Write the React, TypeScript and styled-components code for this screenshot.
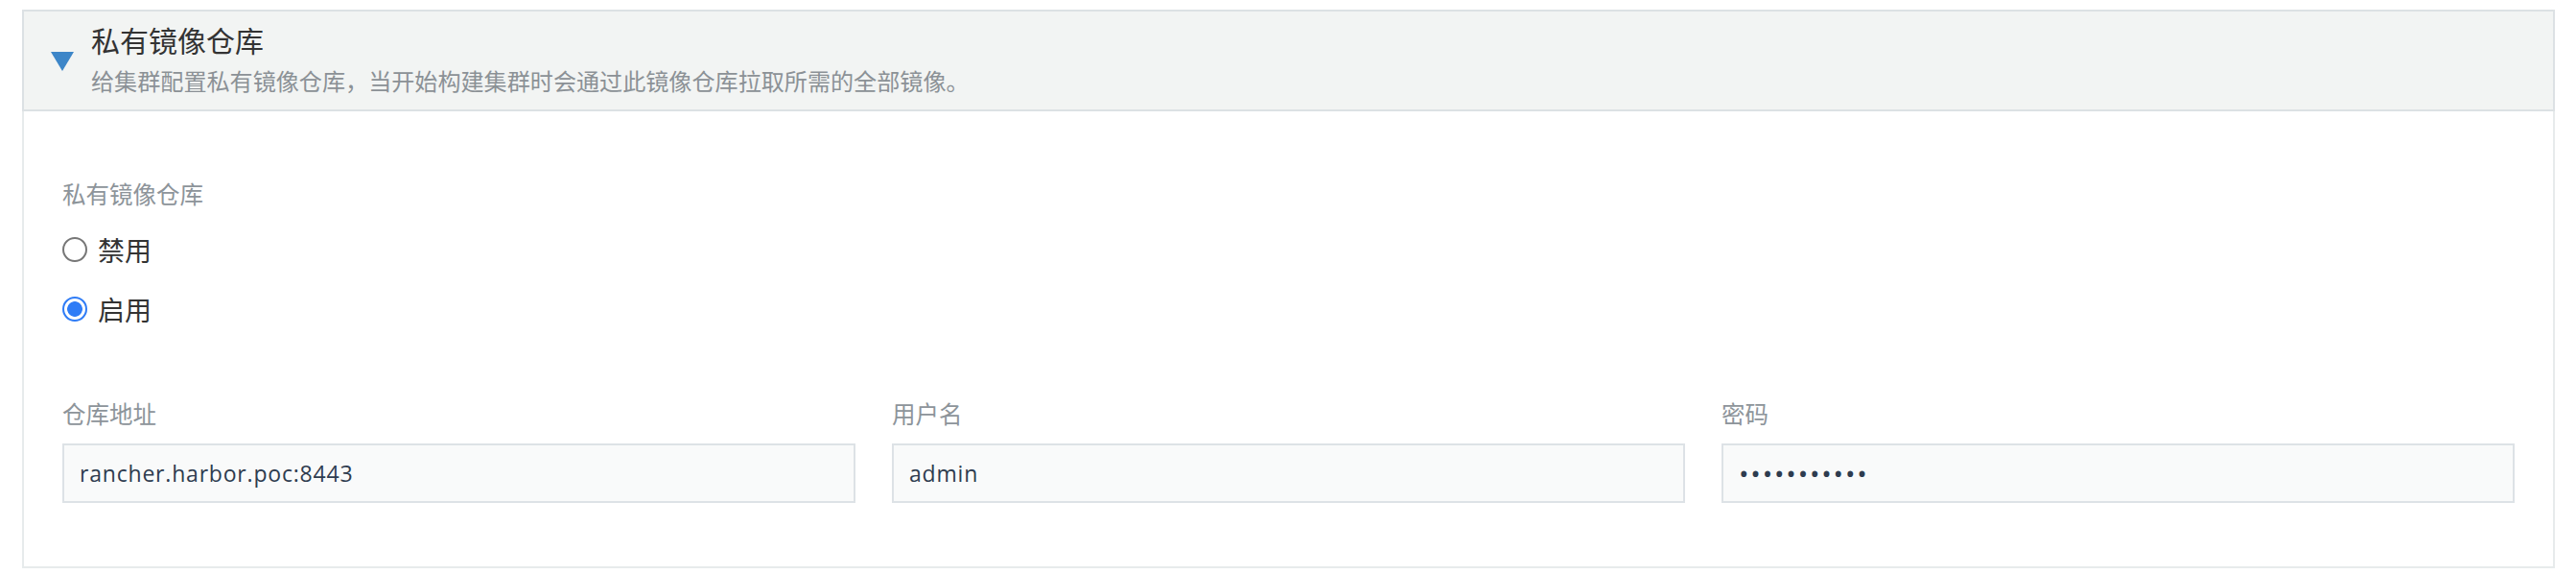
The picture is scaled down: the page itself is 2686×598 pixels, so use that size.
import React from "react";
import styled, { createGlobalStyle } from "styled-components";

const GlobalStyle = createGlobalStyle`
  html, body { margin: 0; padding: 0; background: #ffffff; }
  body { font-family: "Noto Sans CJK SC", "Open Sans", sans-serif; }
  * { box-sizing: border-box; }
`;

const Page = styled.div`
  padding: 10px 22px 0 23px;
`;

const Section = styled.section`
  display: flex;
  flex-direction: column;
`;

const Header = styled.div`
  display: flex;
  align-items: center;
  height: 106px;
  padding: 0 0 4px 28px;
  background: #f2f4f3;
  border: 2px solid #dce1e4;
  gap: 18px;
`;

const Caret = styled.span`
  width: 0;
  height: 0;
  margin-top: 6px;
  border-left: 12px solid transparent;
  border-right: 12px solid transparent;
  border-top: 20px solid #3d86c8;
`;

const HeaderText = styled.div`
  display: flex;
  flex-direction: column;
  gap: 6px;
`;

const Title = styled.h4`
  margin: 0;
  font-size: 30px;
  line-height: 40px;
  font-weight: 400;
  color: #333333;
`;

const Desc = styled.p`
  margin: 0;
  font-size: 24.1px;
  line-height: 34px;
  color: #8b9196;
`;

const Body = styled.div`
  display: flex;
  flex-direction: column;
  padding: 69px 40px 66px 40px;
  border: 2px solid #e7ebec;
  border-top: none;
`;

const FieldLabel = styled.label`
  display: block;
  font-size: 24.5px;
  line-height: 34px;
  color: #8d949a;
`;

const RadioGroup = styled.div`
  display: flex;
  flex-direction: column;
  gap: 18px;
  margin-top: 19px;
`;

const RadioRow = styled.label`
  display: flex;
  align-items: center;
  gap: 11px;
  height: 44px;
  font-size: 28px;
  color: #333333;
`;

const Radio = styled.input`
  appearance: none;
  margin: 0;
  width: 26px;
  height: 26px;
  border-radius: 50%;
  border: 2px solid #777777;
  background: #ffffff;
  &:checked {
    border-color: #2f7cf6;
    background: radial-gradient(circle, #2f7cf6 0 7.5px, #ffffff 8.2px);
  }
`;

const Fields = styled.div`
  display: grid;
  grid-template-columns: repeat(3, 1fr);
  column-gap: 38px;
  margin-top: 70px;
`;

const Field = styled.div`
  display: flex;
  flex-direction: column;
  gap: 14px;
`;

const TextInput = styled.input<{ $secret?: boolean }>`
  height: 62px;
  width: 100%;
  margin: 0;
  padding: 0 16px;
  border: 2px solid #dde2e6;
  border-radius: 0;
  background: #f9fafa;
  outline: none;
  font-family: "Open Sans", "Noto Sans CJK SC", sans-serif;
  font-size: ${(p) => (p.$secret ? "28px" : "23px")};
  letter-spacing: ${(p) => (p.$secret ? "1.8px" : "0.8px")};
  color: #2e3c4f;
`;

export default function App() {
  return (
    <>
      <GlobalStyle />
      <Page>
        <Section>
          <Header>
            <Caret />
            <HeaderText>
              <Title>私有镜像仓库</Title>
              <Desc>给集群配置私有镜像仓库，当开始构建集群时会通过此镜像仓库拉取所需的全部镜像。</Desc>
            </HeaderText>
          </Header>
          <Body>
            <FieldLabel>私有镜像仓库</FieldLabel>
            <RadioGroup>
              <RadioRow>
                <Radio type="radio" name="registry" value="disabled" />
                禁用
              </RadioRow>
              <RadioRow>
                <Radio type="radio" name="registry" value="enabled" defaultChecked />
                启用
              </RadioRow>
            </RadioGroup>
            <Fields>
              <Field>
                <FieldLabel>仓库地址</FieldLabel>
                <TextInput type="text" readOnly value="rancher.harbor.poc:8443" />
              </Field>
              <Field>
                <FieldLabel>用户名</FieldLabel>
                <TextInput type="text" readOnly value="admin" />
              </Field>
              <Field>
                <FieldLabel>密码</FieldLabel>
                <TextInput $secret type="password" readOnly value="abcdefghijk" />
              </Field>
            </Fields>
          </Body>
        </Section>
      </Page>
    </>
  );
}
